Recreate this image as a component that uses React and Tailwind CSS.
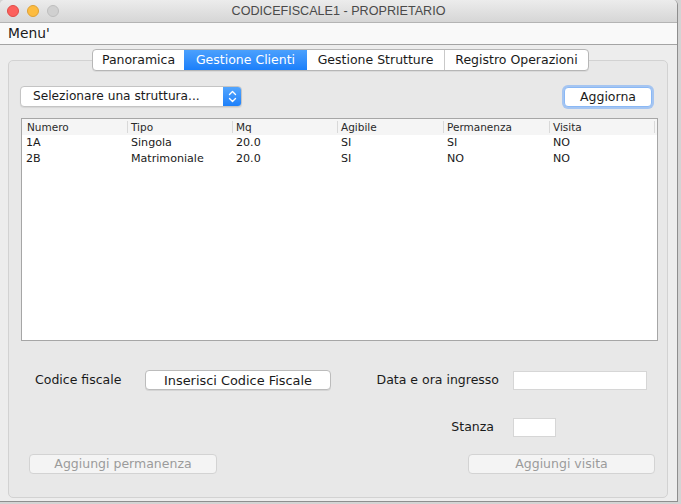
import { useState } from 'react';

const tabs = [
  { label: 'Panoramica', w: 'w-[91px]' },
  { label: 'Gestione Clienti', w: 'w-[123px]' },
  { label: 'Gestione Strutture', w: 'w-[137px]' },
  { label: 'Registro Operazioni', w: 'w-[144px]' },
];
const columns = ['Numero', 'Tipo', 'Mq', 'Agibile', 'Permanenza', 'Visita'];
const rows = [
  ['1A', 'Singola', '20.0', 'SI', 'SI', 'NO'],
  ['2B', 'Matrimoniale', '20.0', 'SI', 'NO', 'NO'],
];

const ui = { fontFamily: '"DejaVu Sans", Verdana, sans-serif' };

const App = () => {
  const [active, setActive] = useState(1);

  return (
    <div className="w-[681px] h-[504px] bg-[#d4d4d4] overflow-hidden text-[#1a1a1a]" style={ui}>
      <div className="w-[678px] h-[502px] bg-[#ededed] border-r border-b border-[#8e8e8e] rounded-t-[5px] flex flex-col overflow-hidden">
        {/* title bar */}
        <div className="h-[23px] shrink-0 grid grid-cols-[1fr_auto_1fr] items-center bg-gradient-to-b from-[#ececec] to-[#d6d6d6] border-b border-[#b4b4b4]">
          <div className="flex items-center gap-[8px] pl-[7px]">
            <span className="w-[12px] h-[12px] rounded-full bg-[#fc605c] border border-[#de4b46]" />
            <span className="w-[12px] h-[12px] rounded-full bg-[#fdbc40] border border-[#dea034]" />
            <span className="w-[12px] h-[12px] rounded-full bg-[#d0d0d0] border border-[#bdbdbd]" />
          </div>
          <div className="text-[12.6px] text-[#4a4a4a]" style={{ fontFamily: '"Liberation Sans", Arial, sans-serif' }}>
            CODICEFISCALE1 - PROPRIETARIO
          </div>
          <div />
        </div>

        {/* menu bar */}
        <div className="h-[22px] shrink-0 bg-[#f9f9f9] border-b border-[#a4a4a4] flex items-center pl-[8px] text-[13.8px]">
          Menu'
        </div>

        {/* tabs */}
        <div className="flex justify-center mt-[4px] pl-[4px] relative z-10">
          <div className="flex h-[22px] text-[12.5px] rounded-[4px] border border-[#b6b6b6] bg-white shadow-[0_1px_0_rgba(0,0,0,0.06)] overflow-hidden">
            {tabs.map((t, i) => (
              <button
                key={t.label}
                onClick={() => setActive(i)}
                className={
                  t.w + ' ' +
                  (i === active
                    ? 'bg-gradient-to-b from-[#4aa0fd] to-[#1a7ffa] text-white'
                    : 'text-[#1a1a1a] ' + (i === 0 || i === active + 1 ? '' : 'border-l border-[#c9c9c9]'))
                }
              >
                {t.label}
              </button>
            ))}
          </div>
        </div>

        {/* tab pane */}
        <div className="mx-[8px] mr-[9px] -mt-[11px] h-[438px] rounded-[5px] border border-[#d2d2d2] bg-[#e8e8e8] flex flex-col pt-[25px]">
          <div className="flex items-center justify-between pl-[11px] pr-[15px]">
            <div className="w-[222px] h-[21px] flex rounded-[4px] bg-white border border-[#c4c4c4] shadow-[0_1px_1px_rgba(0,0,0,0.08)] overflow-hidden">
              <div className="flex-1 flex items-center pl-[12px] text-[12.2px]">Selezionare una struttura...</div>
              <div className="w-[18px] bg-gradient-to-b from-[#52a5fd] to-[#1c80fa] flex items-center justify-center">
                <svg width="9" height="13" viewBox="0 0 9 13" fill="none" stroke="white" strokeWidth="1.4" strokeLinecap="round" strokeLinejoin="round">
                  <path d="M1.5 4.5 L4.5 1.5 L7.5 4.5" />
                  <path d="M1.5 8.5 L4.5 11.5 L7.5 8.5" />
                </svg>
              </div>
            </div>
            <button className="w-[88px] h-[20px] rounded-[4px] bg-white border border-[#8ab8f5] shadow-[0_0_0_2px_rgba(110,168,247,0.55)] text-[12.5px]">
              Aggiorna
            </button>
          </div>

          {/* table */}
          <div className="ml-[12px] mt-[11px] w-[637px] h-[223px] bg-white border border-[#a6a6a6]">
            <div className="grid grid-cols-[106px_105px_105px_106px_106px_105px] h-[16px] bg-[#f5f5f5] text-[10.5px] text-[#2a2a2a] items-center">
              {columns.map((c, i) => (
                <div key={c} className={(i === 0 ? 'pl-[5px] ' : 'pl-[3px] ') + 'h-[12px] leading-[12px] border-r border-[#d9d9d9]'}>
                  {c}
                </div>
              ))}
            </div>
            {rows.map((r) => (
              <div key={r[0]} className="grid grid-cols-[106px_105px_105px_106px_106px_105px] h-[16px] text-[11.1px] items-center">
                {r.map((v, i) => (
                  <div key={i} className={i === 0 ? 'pl-[4px]' : 'pl-[3px]'}>{v}</div>
                ))}
              </div>
            ))}
          </div>

          {/* form */}
          <div className="flex items-center h-[20px] mt-[29px] text-[12.5px]">
            <span className="ml-[26px] w-[110px]">Codice fiscale</span>
            <button className="w-[186px] h-[20px] rounded-[4px] bg-white border border-[#bcbcbc] shadow-[0_1px_0_rgba(0,0,0,0.08)] text-[12.9px]">
              Inserisci Codice Fiscale
            </button>
            <span className="ml-auto">Data e ora ingresso</span>
            <div className="ml-[14px] mr-[20px] w-[134px] h-[19px] bg-white border border-[#d6d6d6]" />
          </div>

          <div className="flex items-center justify-end h-[20px] mt-[27px] text-[12.5px]">
            <span>Stanza</span>
            <div className="ml-[19px] mr-[111px] w-[43px] h-[19px] bg-white border border-[#d6d6d6]" />
          </div>

          <div className="flex items-center justify-between h-[20px] mt-[17px] text-[12.5px] text-[#9b9b9b]">
            <button disabled className="ml-[20px] w-[188px] h-[20px] rounded-[4px] bg-[#f4f4f4] border border-[#d3d3d3]">
              Aggiungi permanenza
            </button>
            <button disabled className="mr-[12px] w-[187px] h-[20px] rounded-[4px] bg-[#f4f4f4] border border-[#d3d3d3]">
              Aggiungi visita
            </button>
          </div>
        </div>
      </div>
    </div>
  );
};

export default App;
